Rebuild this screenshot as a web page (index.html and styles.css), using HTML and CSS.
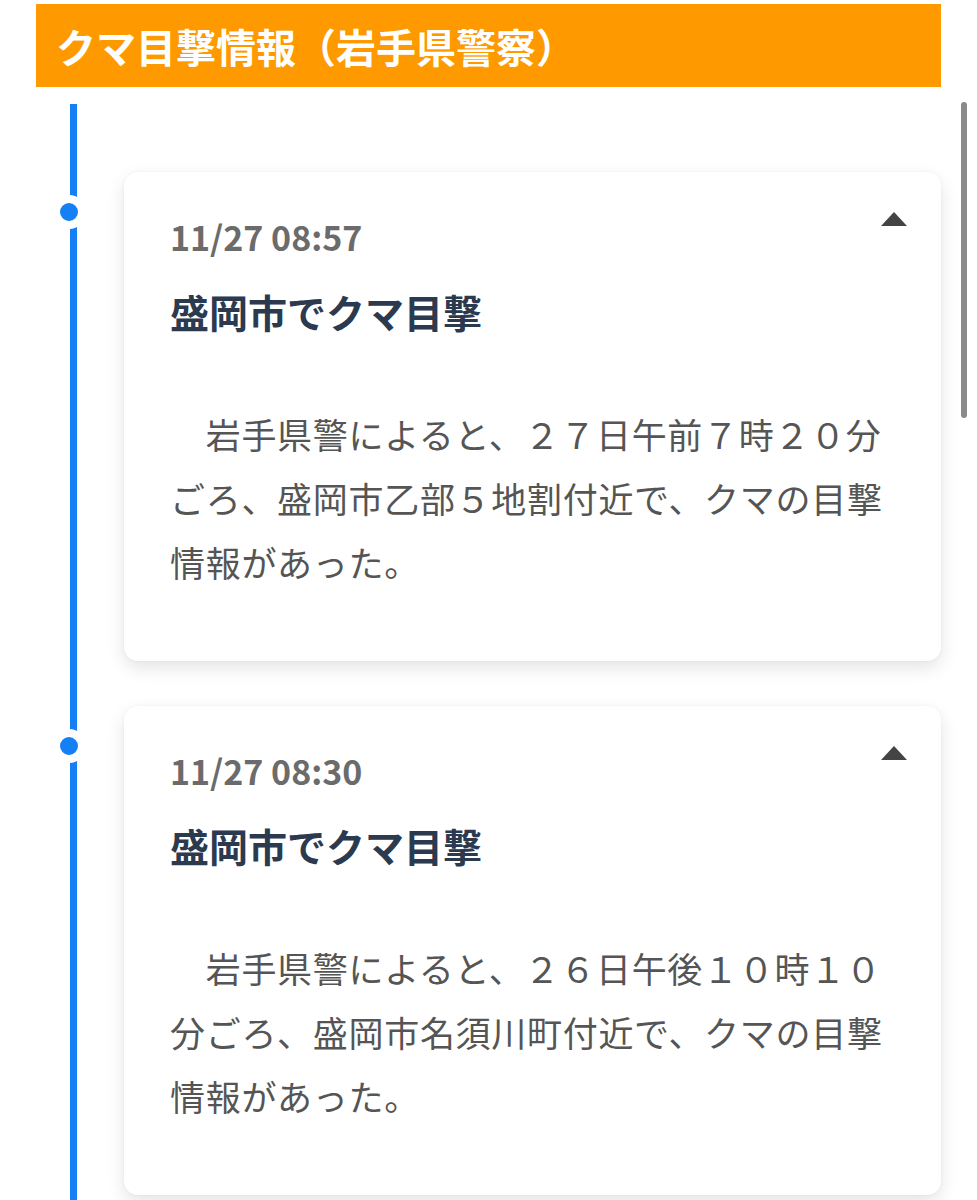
FILE: index.html
```html
<!DOCTYPE html>
<html lang="ja">
<head>
    <meta charset="UTF-8">
    <meta name="viewport" content="width=device-width, initial-scale=1.0">
    <title>クマ目撃情報（岩手県警察）</title>
    <link rel="stylesheet" href="styles.css">
</head>
<body>
    <main class="page">
        <header class="section-head">
            <h1>クマ目撃情報（岩手県警察）</h1>
        </header>

        <div class="timeline">
            <div class="entry">
                <span class="dot"></span>
                <article class="card">
                    <div class="card-top">
                        <time class="date">11/27 08:57</time>
                        <button class="toggle" aria-label="閉じる"></button>
                    </div>
                    <h2 class="title">盛岡市でクマ目撃</h2>
                    <p class="body">　岩手県警によると、２７日午前７時２０分ごろ、盛岡市乙部５地割付近で、クマの目撃情報があった。</p>
                </article>
            </div>

            <div class="entry">
                <span class="dot"></span>
                <article class="card">
                    <div class="card-top">
                        <time class="date">11/27 08:30</time>
                        <button class="toggle" aria-label="閉じる"></button>
                    </div>
                    <h2 class="title">盛岡市でクマ目撃</h2>
                    <p class="body">　岩手県警によると、２６日午後１０時１０分ごろ、盛岡市名須川町付近で、クマの目撃情報があった。</p>
                </article>
            </div>
        </div>
    </main>

    <div class="scroll-thumb"></div>
</body>
</html>
```

FILE: styles.css
```css
html {
    overflow: hidden;
}
body {
    margin: 0;
    background: #fff;
    font-family: "Noto Sans CJK JP", "Noto Sans", sans-serif;
}
.page {
    padding: 4px 36px 0;
}
.section-head {
    background: #ff9900;
    height: 83px;
    display: flex;
    align-items: center;
    padding-left: 20px;
}
.section-head h1 {
    margin: 0;
    color: #fff;
    font-size: 40px;
    font-weight: bold;
    line-height: 1;
}
.timeline {
    position: relative;
    padding: 85px 0 1px;
}
.timeline::before {
    content: "";
    position: absolute;
    left: 34px;
    top: 17px;
    bottom: 0;
    width: 7px;
    background: #1580f5;
}
.entry {
    position: relative;
    padding-left: 88px;
    margin-bottom: 45px;
}
.dot {
    position: absolute;
    left: 16px;
    top: 23px;
    width: 18px;
    height: 18px;
    border-radius: 50%;
    background: #1580f5;
    border: 8px solid #fff;
}
.card {
    background: #fff;
    border-radius: 14px;
    box-shadow: 0 7px 18px rgba(0, 0, 0, 0.11), 0 0 3px rgba(0, 0, 0, 0.05);
    padding: 42px 46px 67px;
}
.card-top {
    display: flex;
    justify-content: space-between;
    align-items: flex-start;
}
.date {
    color: #6b6b6b;
    font-size: 34px;
    font-weight: bold;
    line-height: 46px;
}
.toggle {
    width: 0;
    height: 0;
    padding: 0;
    margin: -2px -12px 0 0;
    border: none;
    border-left: 13px solid transparent;
    border-right: 13px solid transparent;
    border-bottom: 14px solid #444;
    background: none;
    cursor: pointer;
}
.title {
    margin: 26px 0 0;
    color: #2b3a4f;
    font-size: 39px;
    font-weight: bold;
    line-height: 50px;
}
.body {
    margin: 66px 0 0;
    color: #555;
    font-size: 35px;
    font-weight: normal;
    letter-spacing: 0.7px;
    line-height: 64px;
}
.scroll-thumb {
    position: fixed;
    right: 10px;
    top: 102px;
    width: 6px;
    height: 316px;
    border-radius: 3px;
    background: #8a8a8a;
}
```
